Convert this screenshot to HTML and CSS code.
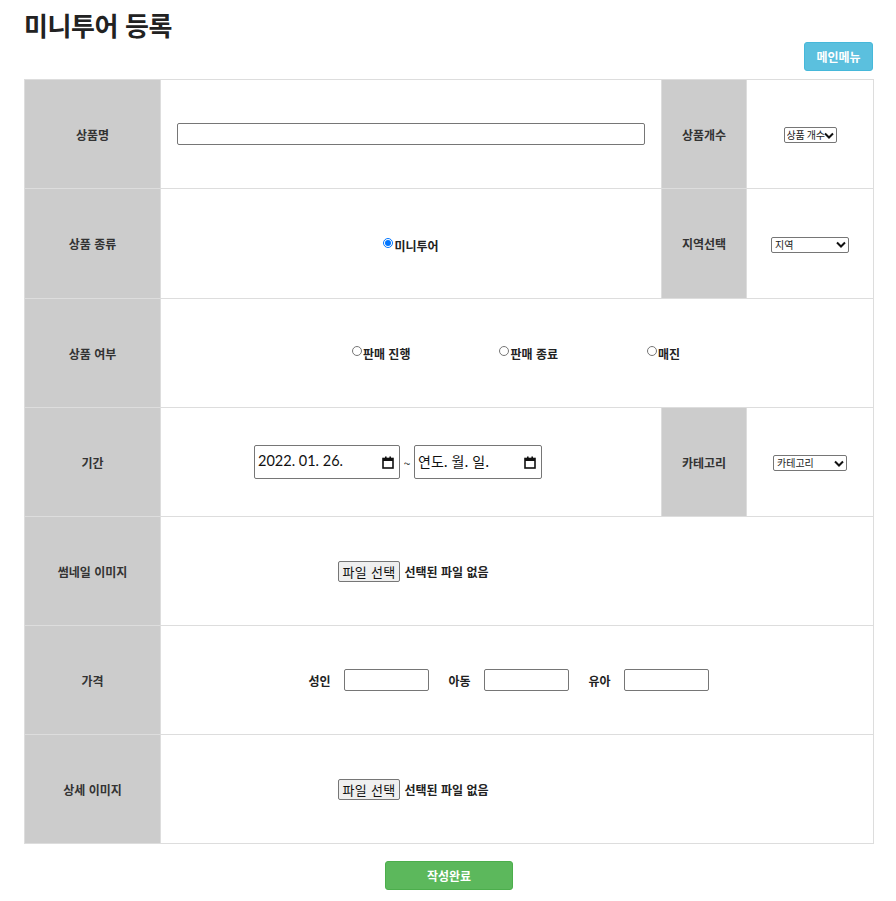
FILE: index.html
```html
<!DOCTYPE html>
<html lang="ko">
<head>
<meta charset="utf-8">
<title>미니투어 등록</title>
<link rel="stylesheet" href="styles.css">
</head>
<body>
<div class="page">
  <h1 class="title">미니투어 등록</h1>
  <div class="toolbar"><button class="btn-menu" type="button">메인메뉴</button></div>
  <table class="form-table">
    <colgroup>
      <col class="c-label">
      <col class="c-field">
      <col class="c-label-sm">
      <col class="c-field-sm">
    </colgroup>
    <tr class="row">
      <th class="label">상품명</th>
      <td class="field"><input class="text-wide" type="text"></td>
      <th class="label">상품개수</th>
      <td class="field"><select class="sel sel-count"><option>상품 개수</option></select></td>
    </tr>
    <tr class="row row-tall">
      <th class="label">상품 종류</th>
      <td class="field"><label class="radio"><input type="radio" name="kind" checked>미니투어</label></td>
      <th class="label">지역선택</th>
      <td class="field"><select class="sel sel-region"><option>지역</option></select></td>
    </tr>
    <tr class="row">
      <th class="label">상품 여부</th>
      <td class="field" colspan="3">
        <div class="radio-group">
          <label class="radio"><input type="radio" name="state">판매 진행</label>
          <label class="radio"><input type="radio" name="state">판매 종료</label>
          <label class="radio"><input type="radio" name="state">매진</label>
        </div>
      </td>
    </tr>
    <tr class="row">
      <th class="label">기간</th>
      <td class="field">
        <div class="date-range">
          <label class="date date-start">
            <span class="date-text date-num">2022. 01. 26.</span>
            <svg class="cal" width="12" height="13" viewBox="0 0 12 13" aria-hidden="true"><rect x="1" y="2.5" width="10" height="9.5" fill="none" stroke="#111" stroke-width="1.6"/><rect x="1" y="2" width="10" height="3" fill="#111"/><rect x="3" y="0.5" width="1.6" height="2.5" fill="#111"/><rect x="7.4" y="0.5" width="1.6" height="2.5" fill="#111"/></svg>
          </label>
          <span class="tilde">~</span>
          <label class="date date-end">
            <span class="date-text">연도. 월. 일.</span>
            <svg class="cal" width="12" height="13" viewBox="0 0 12 13" aria-hidden="true"><rect x="1" y="2.5" width="10" height="9.5" fill="none" stroke="#111" stroke-width="1.6"/><rect x="1" y="2" width="10" height="3" fill="#111"/><rect x="3" y="0.5" width="1.6" height="2.5" fill="#111"/><rect x="7.4" y="0.5" width="1.6" height="2.5" fill="#111"/></svg>
          </label>
        </div>
      </td>
      <th class="label">카테고리</th>
      <td class="field"><select class="sel sel-cat"><option>카테고리</option></select></td>
    </tr>
    <tr class="row">
      <th class="label">썸네일 이미지</th>
      <td class="field" colspan="3">
        <label class="file">
          <span class="file-btn">파일 선택</span>
          <span class="file-name">선택된 파일 없음</span>
        </label>
      </td>
    </tr>
    <tr class="row">
      <th class="label">가격</th>
      <td class="field" colspan="3">
        <div class="prices">
          <span class="price-label">성인</span><input class="price" type="text">
          <span class="price-label">아동</span><input class="price" type="text">
          <span class="price-label">유아</span><input class="price" type="text">
        </div>
      </td>
    </tr>
    <tr class="row">
      <th class="label">상세 이미지</th>
      <td class="field" colspan="3">
        <label class="file">
          <span class="file-btn">파일 선택</span>
          <span class="file-name">선택된 파일 없음</span>
        </label>
      </td>
    </tr>
  </table>
  <div class="actions"><button class="btn-submit" type="button">작성완료</button></div>
</div>
</body>
</html>
```

FILE: styles.css
```css
html, body {
  margin: 0;
  padding: 0;
  background: #fff;
}
body {
  font-family: "Noto Sans CJK KR", "Noto Sans", sans-serif;
  color: #333;
}
.page {
  padding: 0 23px 0 24px;
}
.title {
  margin: 8px 0 0;
  font-size: 26px;
  line-height: 34px;
  font-weight: 700;
  color: #222;
  letter-spacing: -0.4px;
}
.toolbar {
  display: flex;
  justify-content: flex-end;
}
.btn-menu {
  width: 69px;
  height: 29px;
  border: 1px solid #46b8da;
  border-radius: 3px;
  background: #5bc0de;
  color: #fff;
  font-family: inherit;
  font-size: 12px;
  font-weight: 700;
  padding: 0;
}
.form-table {
  width: 849px;
  margin-top: 8px;
  border-collapse: collapse;
  table-layout: fixed;
}
.c-label { width: 136px; }
.c-field { width: 501px; }
.c-label-sm { width: 85px; }
.c-field-sm { width: 127px; }
.row { height: 109px; }
.row-tall { height: 110px; }
.form-table th,
.form-table td {
  border: 1px solid #ddd;
  padding: 0;
  vertical-align: middle;
  text-align: center;
}
.label {
  background: #ccc;
  font-size: 12px;
  font-weight: 700;
  color: #333;
}
.field {
  background: #fff;
  font-size: 12px;
  font-weight: 700;
  color: #222;
}
.text-wide {
  box-sizing: border-box;
  display: block;
  width: 468px;
  height: 22px;
  margin: 0 0 0 16px;
  border: 1px solid #767676;
  border-radius: 2px;
}
.sel {
  -webkit-appearance: none;
  appearance: none;
  box-sizing: border-box;
  height: 16px;
  padding: 0 14px 0 3px;
  font-family: inherit;
  font-size: 10px;
  line-height: 14px;
  color: #222;
  border: 1px solid #767676;
  border-radius: 2px;
  background: #fff url("data:image/svg+xml,%3Csvg xmlns='http://www.w3.org/2000/svg' width='10' height='7' viewBox='0 0 10 7'%3E%3Cpath d='M1 1.5 L5 5.5 L9 1.5' fill='none' stroke='%23111' stroke-width='2'/%3E%3C/svg%3E") no-repeat right 2px center;
}
.sel-count { width: 53px; padding-left: 2px; padding-right: 10px; letter-spacing: -0.3px; }
.sel-region { width: 78px; }
.sel-cat { width: 74px; }
.radio {
  display: inline-flex;
  align-items: flex-start;
  font-size: 12px;
  font-weight: 700;
  color: #222;
}
.radio input {
  width: 10px;
  height: 10px;
  margin: 1px 1px 0 0;
}
.radio-group {
  display: flex;
  justify-content: center;
  gap: 89px;
  padding-right: 2px;
}
.date-range {
  display: flex;
  align-items: center;
  justify-content: center;
  padding-right: 26px;
}
.date {
  box-sizing: border-box;
  display: flex;
  align-items: center;
  justify-content: space-between;
  height: 34px;
  padding: 0 5px 2px 3px;
  border: 1px solid #767676;
  border-radius: 2px;
  background: #fff;
  font-size: 14px;
  font-weight: 400;
  color: #111;
}
.date-num {
  font-family: "Lato", "Noto Sans CJK KR", sans-serif;
  font-size: 14.5px;
}
.date-text {
  line-height: 20px;
}
.cal { flex: none; margin-top: 2px; }
.date-start { width: 146px; }
.date-end { width: 128px; }
.tilde {
  width: 14px;
  font-size: 12px;
  font-weight: 400;
  text-align: center;
}
.file {
  display: inline-flex;
  align-items: center;
  width: 357px;
  gap: 4px;
  padding-right: 2px;
}
.file-btn {
  box-sizing: border-box;
  height: 21px;
  padding: 0 4px;
  border: 1px solid #767676;
  border-radius: 2px;
  background: #efefef;
  font-size: 13px;
  font-weight: 400;
  line-height: 19px;
  color: #111;
  letter-spacing: 0.3px;
}
.file-name {
  font-size: 12px;
  font-weight: 700;
  color: #222;
}
.prices {
  display: flex;
  align-items: center;
  justify-content: center;
  padding-right: 17px;
}
.price-label {
  width: 35px;
  text-align: left;
  font-size: 12px;
  font-weight: 700;
  margin-left: 20px;
}
.price-label:first-child {
  margin-left: 0;
}
.price {
  box-sizing: border-box;
  width: 85px;
  height: 22px;
  border: 1px solid #767676;
  border-radius: 2px;
}
.actions {
  display: flex;
  justify-content: center;
  margin-top: 17px;
  padding-left: 1px;
}
.btn-submit {
  width: 128px;
  height: 29px;
  border: 1px solid #4cae4c;
  border-radius: 3px;
  background: #5cb85c;
  color: #fff;
  font-family: inherit;
  font-size: 12px;
  font-weight: 700;
  padding: 0;
}
```
